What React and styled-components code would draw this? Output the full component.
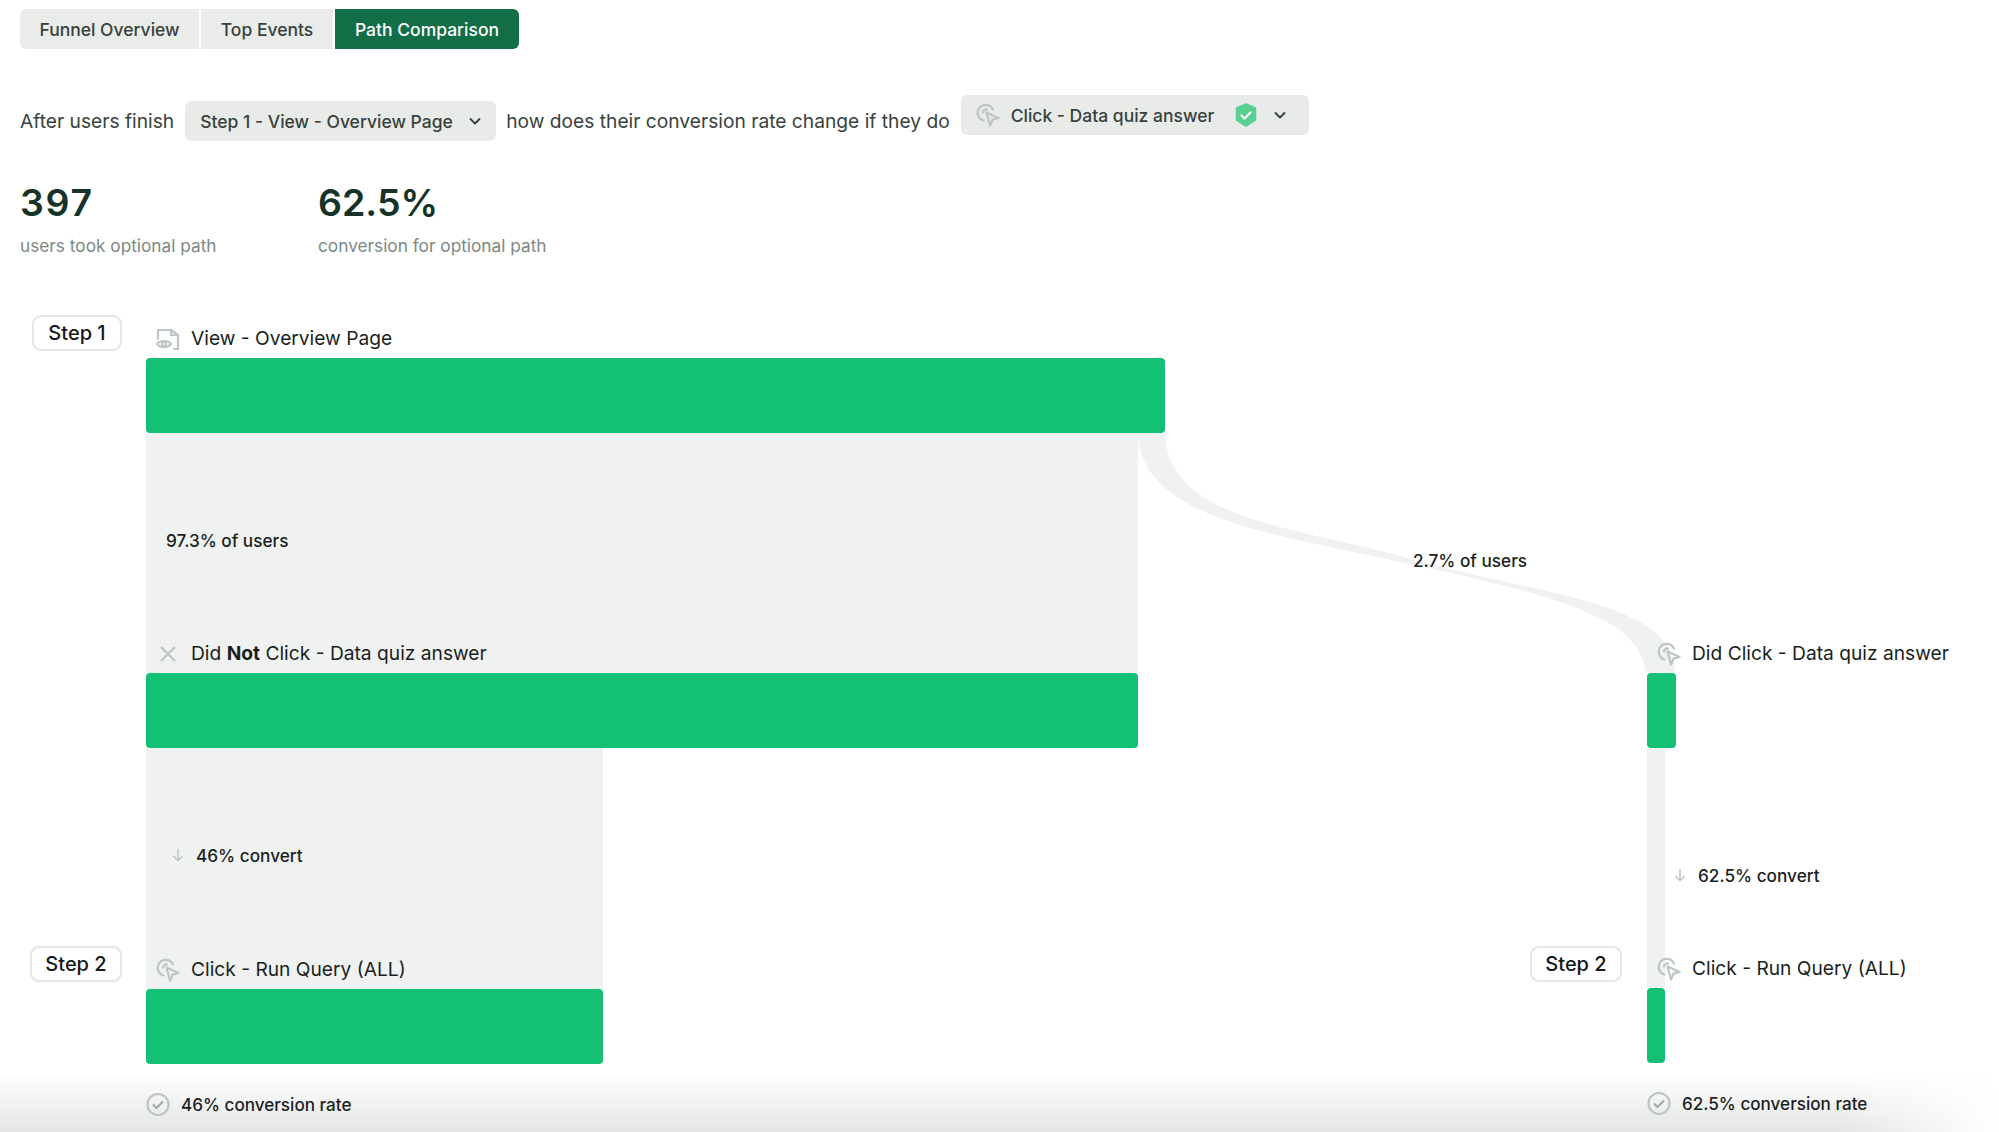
import React from "react";
import styled, { createGlobalStyle } from "styled-components";

const Global = createGlobalStyle`
  html, body { margin: 0; padding: 0; background: #fff; }
  body { font-family: Inter, "Liberation Sans", Arial, sans-serif; color: #1c2321; }
`;

const Page = styled.div`
  position: relative;
  height: 1132px;
  overflow: hidden;
  box-sizing: border-box;
  padding: 9px 0 0 20px;
`;

const Tabs = styled.div`
  display: flex;
  height: 40px;
  gap: 2px;
`;

const Tab = styled.div`
  display: flex;
  align-items: center;
  justify-content: center;
  width: ${(p) => p.$w}px;
  font-size: 17.5px;
  font-weight: 500;
  background: ${(p) => (p.$active ? "#126e47" : "#eaecea")};
  color: ${(p) => (p.$active ? "#ffffff" : "#37423e")};
  border-radius: ${(p) => p.$radius};
`;

const QueryRow = styled.div`
  display: flex;
  align-items: center;
  margin-top: 49px;
  height: 46px;
  font-size: 19.2px;
  color: #37423e;
  white-space: nowrap;
`;

const Select = styled.div`
  display: flex;
  align-items: center;
  box-sizing: border-box;
  height: 40px;
  width: ${(p) => p.$w}px;
  margin: ${(p) => p.$margin};
  padding: 0 14px 0 15px;
  background: #e9ebe9;
  border-radius: 6px;
  font-size: 17.5px;
  font-weight: 500;
  color: #37423e;
`;

const SelectText = styled.span`
  flex: 1;
`;

const Stats = styled.div`
  display: flex;
  margin-top: 35px;
`;

const Stat = styled.div`
  width: 298px;
`;

const StatValue = styled.div`
  font-size: 37.5px;
  line-height: 48px;
  font-weight: 600;
  letter-spacing: ${(p) => p.$spacing || 0}px;
  color: #16332a;
`;

const StatLabel = styled.div`
  margin-top: 7px;
  font-size: 17.25px;
  line-height: 24px;
  color: #7b8884;
`;

const Diagram = styled.div`
  position: relative;
  z-index: 1;
  display: grid;
  grid-template-columns: 126px 1384px 117px 1fr;
  margin: 57px 0 0 -20px;
  padding-left: 20px;
`;

const Curve = styled.svg`
  position: absolute;
  left: 0;
  top: -315px;
  width: 1999px;
  height: 1132px;
  pointer-events: none;
`;

const Rail = styled.div`
  position: relative;
  padding-top: ${(p) => p.$top}px;
`;

const StepPill = styled.div`
  display: flex;
  align-items: center;
  justify-content: center;
  box-sizing: border-box;
  width: ${(p) => p.$w}px;
  height: 36px;
  margin: ${(p) => p.$margin};
  background: #fff;
  border: 2px solid #e3e6e6;
  border-radius: 9px;
  font-size: 20px;
  font-weight: 500;
  color: #15191a;
`;

const PathColumn = styled.div`
  position: relative;
  display: flex;
  flex-direction: column;
  align-items: flex-start;
`;

const NodeLabel = styled.div`
  display: flex;
  align-items: center;
  height: 33px;
  padding-left: 10px;
  font-size: 19.2px;
  line-height: 33px;
  color: #1a1f1e;
  white-space: nowrap;
  margin-top: ${(p) => p.$top || 0}px;
  margin-bottom: 3px;
`;

const NodeIcon = styled.span`
  display: flex;
  align-items: center;
  justify-content: center;
  flex: none;
  width: 24px;
  height: 24px;
  margin-right: 11px;
  color: #bcc6c2;
`;

const Bar = styled.div`
  width: ${(p) => p.$w}px;
  height: 75px;
  background: #14c174;
  border-radius: 4px;
  flex: none;
`;

const Flow = styled.div`
  display: flex;
  flex-direction: column;
  flex: none;
  width: ${(p) => p.$w}px;
  height: ${(p) => p.$h}px;
  background: ${(p) => (p.$none ? "transparent" : "#f0f2f1")};
`;

const Note = styled.div`
  display: flex;
  align-items: center;
  height: 24px;
  margin-top: ${(p) => p.$top}px;
  padding-left: ${(p) => p.$left}px;
  font-size: 17.2px;
  font-weight: 500;
  color: #1a1f1e;
  white-space: nowrap;
`;

const ArrowIcon = styled.svg`
  flex: none;
  width: 14px;
  height: 14px;
  margin-right: 11px;
  color: #bcc6c2;
`;

const FreeNote = styled.div`
  position: absolute;
  left: 1413px;
  top: 234px;
  font-size: 17.2px;
  font-weight: 500;
  line-height: 24px;
  color: #1a1f1e;
  white-space: nowrap;
`;

const Result = styled.div`
  display: flex;
  align-items: center;
  height: 24px;
  margin-top: 28px;
  font-size: 17.1px;
  font-weight: 500;
  color: #1a1f1e;
  white-space: nowrap;
`;

const ResultIcon = styled.svg`
  flex: none;
  width: 24px;
  height: 24px;
  margin-right: 11px;
  color: #bcc6c2;
`;

const BottomFade = styled.div`
  position: absolute;
  left: 0;
  right: 0;
  bottom: 0;
  height: 60px;
  background: linear-gradient(to bottom, rgba(230, 231, 231, 0), rgba(228, 229, 229, 1));
  mask-image: linear-gradient(to right, #000 92%, transparent 100%);
  pointer-events: none;
`;

const Click = ({ size = 24 }) => (
  <svg width={size} height={size} viewBox="0 0 24 24" fill="none" stroke="currentColor" strokeWidth="2.2" strokeLinejoin="round" strokeLinecap="round">
    <path d="M7.5 17.5A8 8 0 1 1 17 6.5" />
    <path d="M7 9.5a3.6 3.6 0 0 1 4-3" />
    <path d="M10.5 9.5l12 5.5-6 1.6-2.4 6z" />
  </svg>
);

const ViewPage = () => (
  <svg width="24" height="24" viewBox="0 0 24 24" fill="none" stroke="currentColor" strokeWidth="2.2" strokeLinejoin="round" strokeLinecap="round">
    <path d="M2 12V3h13v5h7v14h-4" />
    <path d="M15 3l7 5" />
    <path d="M1 17c2.5-4 11-4 14 0-3 4-11.500 4-14 0z" />
    <circle cx="8" cy="17" r="2" />
  </svg>
);

const Cross = () => (
  <svg width="18" height="18" viewBox="0 0 18 18" fill="none" stroke="currentColor" strokeWidth="2.2">
    <path d="M2 2l14 14M16 2L2 16" />
  </svg>
);

const Chevron = () => (
  <svg width="14" height="14" viewBox="0 0 14 14" fill="none" stroke="#37423e" strokeWidth="1.9" strokeLinecap="round" strokeLinejoin="round">
    <path d="M2.500 5l4.500 4.500L11.500 5" />
  </svg>
);

const Shield = () => (
  <svg width="22" height="24" viewBox="0 0 22 24" style={{ marginRight: 16 }}>
    <path d="M11 1l9.500 4v12L11 23 1.500 17V5z" fill="#58d08f" stroke="#58d08f" strokeWidth="1.500" strokeLinejoin="round" />
    <path d="M6.500 12.500l3 3 6-6" fill="none" stroke="#fff" strokeWidth="2.2" strokeLinecap="round" strokeLinejoin="round" />
  </svg>
);

const Arrow = () => (
  <ArrowIcon viewBox="0 0 14 14" fill="none" stroke="currentColor" strokeWidth="1.500" strokeLinecap="round" strokeLinejoin="round">
    <path d="M7 1.500v11M2.800 8.500L7 12.500l4.200-4" />
  </ArrowIcon>
);

const Check = () => (
  <ResultIcon viewBox="0 0 24 22" fill="none" stroke="currentColor" strokeWidth="2.200" strokeLinecap="round" strokeLinejoin="round">
    <circle cx="12" cy="11.500" r="10.500" />
    <path d="M7.500 12l3 3 6-6" stroke="#9aa7a2" strokeWidth="1.800" />
  </ResultIcon>
);

export default function App() {
  return (
    <Page>
      <Global />
      <Tabs>
        <Tab $w={179} $radius="6px 0 0 6px">Funnel Overview</Tab>
        <Tab $w={132} $radius="0">Top Events</Tab>
        <Tab $w={184} $radius="0 6px 6px 0" $active>Path Comparison</Tab>
      </Tabs>
      <QueryRow>
        After users finish
        <Select $w={311} $margin="0 10px 0 11px">
          <SelectText>Step 1 - View - Overview Page</SelectText>
          <Chevron />
        </Select>
        how does their conversion rate change if they do
        <Select $w={348} $margin="0 0 12px 11px">
          <NodeIcon><Click /></NodeIcon>
          <SelectText>Click - Data quiz answer</SelectText>
          <Shield />
          <Chevron />
          <span style={{ width: 8 }} />
        </Select>
      </QueryRow>
      <Stats>
        <Stat>
          <StatValue $spacing={1.7}>397</StatValue>
          <StatLabel>users took optional path</StatLabel>
        </Stat>
        <Stat>
          <StatValue>62.5%</StatValue>
          <StatLabel>conversion for optional path</StatLabel>
        </Stat>
      </Stats>
      <Diagram>
        <Curve viewBox="0 0 1999 1132">
          <path
            d="M1165 433 C1168 520 1290 525 1400 556 C1540 596 1675 600 1675 673 L1646 673 C1640 620 1570 598 1400 562 C1280 535 1140 520 1138 433 Z"
            fill="#f0f2f1"
          />
        </Curve>
        <Rail $top={0}>
          <StepPill $w={90} $margin="0 0 0 12px">Step 1</StepPill>
          <StepPill $w={92} $margin="595px 0 0 10px">Step 2</StepPill>
        </Rail>
        <PathColumn>
          <NodeLabel $top={7}>
            <NodeIcon><ViewPage /></NodeIcon>
            View - Overview Page
          </NodeLabel>
          <Bar $w={1019} />
          <Flow $w={992} $h={240}>
            <Note $top={95} $left={20}>97.3% of users</Note>
            <NodeLabel $top={85}>
              <NodeIcon><Cross /></NodeIcon>
              <span>Did <b>Not</b> Click - Data quiz answer</span>
            </NodeLabel>
          </Flow>
          <Bar $w={992} />
          <Flow $w={457} $h={241}>
            <Note $top={95} $left={25}>
              <Arrow />
              46% convert
            </Note>
            <NodeLabel $top={86}>
              <NodeIcon><Click /></NodeIcon>
              Click - Run Query (ALL)
            </NodeLabel>
          </Flow>
          <Bar $w={457} />
          <Result>
            <Check />
            46% conversion rate
          </Result>
        </PathColumn>
        <Rail $top={631}>
          <StepPill $w={92} $margin="0">Step 2</StepPill>
        </Rail>
        <PathColumn>
          <Flow $w={18} $h={358} $none>
            <NodeLabel $top={322}>
              <NodeIcon><Click /></NodeIcon>
              Did Click - Data quiz answer
            </NodeLabel>
          </Flow>
          <Bar $w={29} />
          <Flow $w={18} $h={240}>
            <Note $top={115} $left={26}>
              <Arrow />
              62.5% convert
            </Note>
            <NodeLabel $top={65}>
              <NodeIcon><Click /></NodeIcon>
              Click - Run Query (ALL)
            </NodeLabel>
          </Flow>
          <Bar $w={18} />
          <Result>
            <Check />
            62.5% conversion rate
          </Result>
        </PathColumn>
        <FreeNote>2.7% of users</FreeNote>
      </Diagram>
      <BottomFade />
    </Page>
  );
}
